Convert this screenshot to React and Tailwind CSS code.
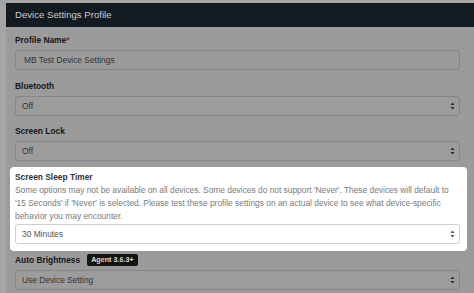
import React from "react";

const font = { fontFamily: '"Liberation Sans", Arial, sans-serif' };

const Arrows = ({ color = "#2a2a2a" }) => (
  <svg width="5" height="8" viewBox="0 0 5 8" className="shrink-0">
    <path d="M2.5 0.5 L4.5 3 H0.5 Z" fill={color} />
    <path d="M2.5 7.5 L4.5 5 H0.5 Z" fill={color} />
  </svg>
);

const DimSelect = ({ value }) => (
  <div className="w-[445px] h-[20px] border border-[#868686] rounded-[3px] bg-[#9c9c9c] flex items-center justify-between pl-[6px] pr-[4px] text-[8.4px] text-[#333]">
    <span>{value}</span>
    <Arrows />
  </div>
);

const Label = ({ children }) => (
  <div className="text-[8.4px] font-bold leading-[14px] text-[#161616]">{children}</div>
);

export default function App() {
  return (
    <div style={font} className="w-[474px] h-[293px] overflow-hidden bg-[#a5a5a5] pt-[3px] pl-[6px]">
      <div className="bg-[#9b9b9b] h-full">
        {/* Header */}
        <div className="h-[24px] bg-[#131a20] flex items-center pl-[9px] text-[9.6px] text-[#c9ccce]">
          Device Settings Profile
        </div>

        <div className="pl-[9px] pt-[6px]">
          <Label>
            Profile Name<span className="text-[#8c2a2a]">*</span>
          </Label>
          <div className="mt-[3px] w-[445px] h-[20px] border border-[#868686] rounded-[3px] flex items-center pl-[8px] text-[8.4px] text-[#333]">
            MB Test Device Settings
          </div>

          <div className="mt-[9px]">
            <Label>Bluetooth</Label>
          </div>
          <div className="mt-[3px]">
            <DimSelect value="Off" />
          </div>

          <div className="mt-[8px]">
            <Label>Screen Lock</Label>
          </div>
          <div className="mt-[3px]">
            <DimSelect value="Off" />
          </div>

          {/* Highlighted group */}
          <div className="mt-[6px] -ml-[5px] w-[457px] bg-white rounded-[4px] pl-[5px] pt-[3px] pb-[7px]">
            <div className="text-[8.4px] font-bold leading-[14px] text-[#333]">Screen Sleep Timer</div>
            <p className="text-[8.4px] leading-[13px] text-[#7a7a7a] w-[442px]">
              Some options may not be available on all devices. Some devices do not support 'Never'. These devices will default to '15 Seconds' if 'Never' is selected. Please test these profile settings on an actual device to see what device-specific behavior you may encounter.
            </p>
            <div className="mt-[1px] w-[445px] h-[20px] border border-[#cfcfcf] rounded-[3px] bg-white flex items-center justify-between pl-[6px] pr-[4px] text-[8.4px] text-[#555]">
              <span>30 Minutes</span>
              <Arrows color="#555" />
            </div>
          </div>

          <div className="mt-[2px] flex items-center gap-[7px] h-[14px]">
            <Label>Auto Brightness</Label>
            <span className="bg-[#121212] text-[#dcdcdc] text-[7.2px] font-bold rounded-[2px] px-[4px] h-[12px] flex items-center">
              Agent 3.6.3+
            </span>
          </div>
          <div className="mt-[3px]">
            <DimSelect value="Use Device Setting" />
          </div>
        </div>
      </div>
    </div>
  );
}
